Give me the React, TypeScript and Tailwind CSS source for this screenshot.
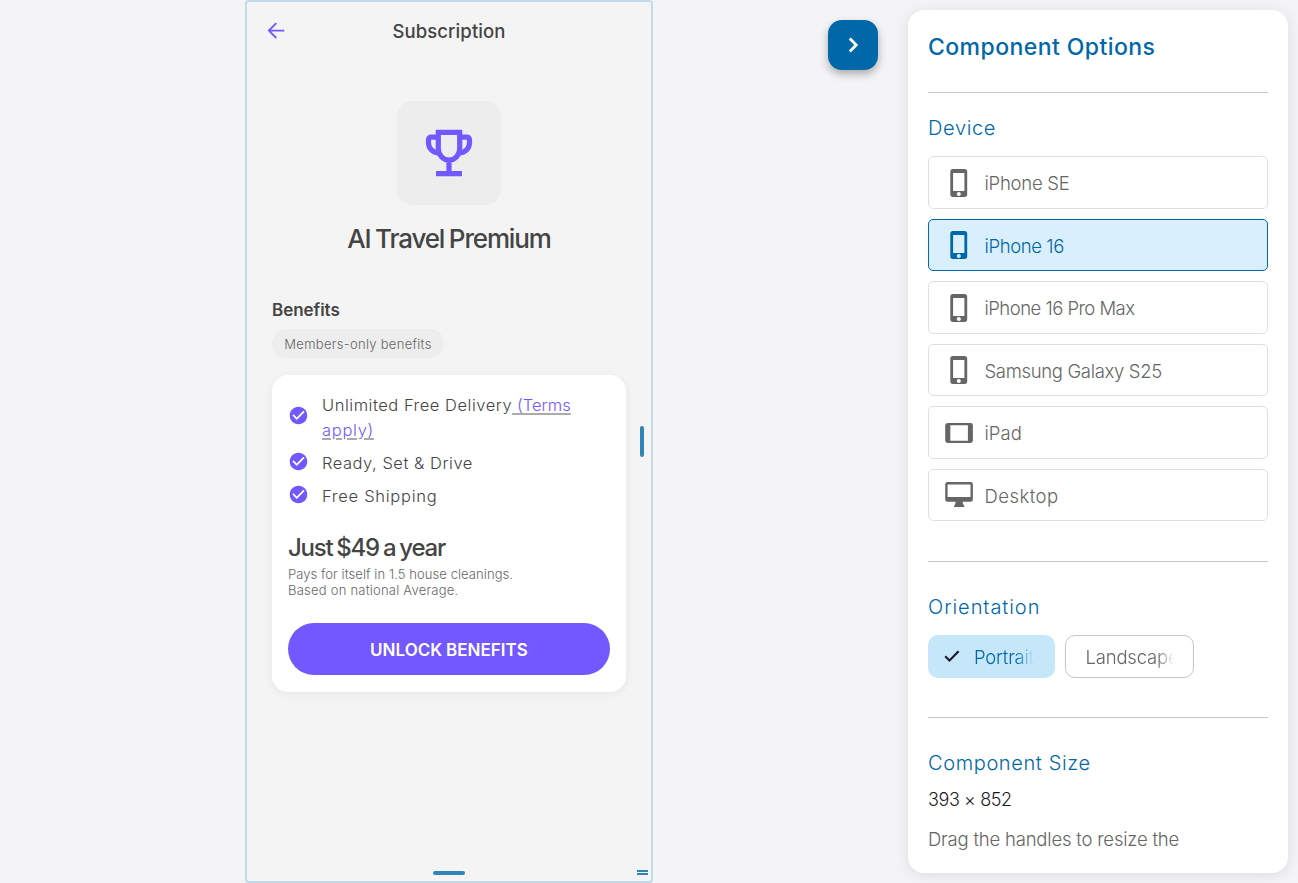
import React from "react";
import { MdCheckCircle } from "react-icons/md";

function PhoneIcon() {
  return (
    <svg width="28" height="28" viewBox="0 0 28 28" className="shrink-0">
      <path
        fill="currentColor"
        fillRule="evenodd"
        d="M8 0h11.500a2.700 2.700 0 0 1 2.700 2.700v22.600a2.700 2.700 0 0 1-2.700 2.700H8a2.700 2.700 0 0 1-2.700-2.700V2.700A2.700 2.700 0 0 1 8 0zM8.100 4v18h11.300V4zM13.800 23a2 2 0 1 0 .01 0z"
      />
    </svg>
  );
}

function TabletIcon() {
  return (
    <svg width="28" height="28" viewBox="0 0 28 28" className="shrink-0">
      <path
        fill="currentColor"
        fillRule="evenodd"
        d="M2.500 4h23a2.400 2.400 0 0 1 2.400 2.400v15.200a2.400 2.400 0 0 1-2.400 2.400h-23A2.400 2.400 0 0 1 .200 21.600V6.400A2.400 2.400 0 0 1 2.500 4zM5.300 6.200v15.600h17.600V6.200z"
      />
    </svg>
  );
}

function DesktopIcon() {
  return (
    <svg width="28" height="28" viewBox="0 0 28 28" className="shrink-0">
      <path
        fill="currentColor"
        fillRule="evenodd"
        d="M2.600 1h22.900a2.400 2.400 0 0 1 2.400 2.400v15a2.400 2.400 0 0 1-2.400 2.400h-7.700v1.500l1.500 3v.700H9v-.700l1.500-3v-1.500H2.600a2.400 2.400 0 0 1-2.400-2.400v-15A2.400 2.400 0 0 1 2.600 1zM2.600 3.500V16h22.900V3.500z"
      />
    </svg>
  );
}

const devices = [
  { name: "iPhone SE", Icon: PhoneIcon, tracking: "tracking-[-0.25px]" },
  { name: "iPhone 16", Icon: PhoneIcon, tracking: "tracking-[-0.4px]", selected: true },
  { name: "iPhone 16 Pro Max", Icon: PhoneIcon, tracking: "tracking-[-0.53px]" },
  { name: "Samsung Galaxy S25", Icon: PhoneIcon, tracking: "tracking-[-0.34px]" },
  { name: "iPad", Icon: TabletIcon, tracking: "tracking-[0.05px]" },
  { name: "Desktop", Icon: DesktopIcon, tracking: "tracking-[0.45px]" },
];

function Phone() {
  return (
    <section className="relative flex h-[883px] w-[408px] flex-col rounded-[4px] border-2 border-[#c1dbea] bg-[#f4f4f4] text-[#444]">
      <header className="flex h-[60px] items-center px-5">
        <svg width="18" height="18" viewBox="0 0 18 18" className="mb-[3px] shrink-0 text-[#7357ff]">
          <path d="M9.300 1.200 1.900 8.600 9.300 16M1.900 8.600H17.300" fill="none" stroke="currentColor" strokeWidth="1.900" />
        </svg>
        <h1 className="flex-1 pr-[18px] text-center text-[18.500px] font-medium tracking-[0.1px]">Subscription</h1>
      </header>
      <div className="flex flex-col items-center pt-[39px]">
        <div className="flex size-[104px] items-center justify-center rounded-2xl bg-[#ededed]">
          <svg width="48" height="48" viewBox="0 0 48 48" className="text-[#7357ff]">
            <path
              d="M13.300 3.400h21.400v16a10.700 11.700 0 0 1-21.400 0zM13.300 8.200H6a2.500 2.500 0 0 0-2.500 2.500v3.100a10 10 0 0 0 10 10M34.700 8.200H42a2.500 2.500 0 0 1 2.500 2.500v3.100a10 10 0 0 1-10 10M24 30v15M11 44.700h26"
              fill="none"
              stroke="currentColor"
              strokeWidth="5.200"
            />
          </svg>
        </div>
        <h2 className="mt-[14px] text-[26px] leading-[39px] font-medium tracking-[-1.150px] [word-spacing:-1.200px]">AI Travel Premium</h2>
      </div>
      <div className="px-[25px] pt-10">
        <h3 className="pt-px text-[17px] leading-[23px] font-semibold tracking-[-0.05px]">Benefits</h3>
        <span className="mt-[7px] flex h-[29px] w-[172px] items-center justify-center rounded-full bg-[#ededed] pt-[2px] text-[13px] font-light tracking-[0.3px] text-[#666]">
          Members-only benefits
        </span>
        <div className="mt-[17px] flex h-[317px] flex-col rounded-2xl bg-white px-4 pt-[18px] shadow-[0_2px_8px_rgba(0,0,0,0.06)]">
          <ul className="flex flex-col gap-2 text-[16.500px] leading-[25px] font-light tracking-[0.52px]">
            <li className="flex items-center gap-[13px]">
              <MdCheckCircle size={21} className="mb-[5px] shrink-0 text-[#7357ff]" />
              <span className="w-[270px]">
                Unlimited Free Delivery
                <span className="tracking-[0.050px] text-[#7357ff] underline decoration-[#aaa] decoration-[1.500px] underline-offset-2">
                  {" "}(Terms<br /><span className="tracking-[0.7px]">apply)</span>
                </span>
              </span>
            </li>
            <li className="flex h-[25px] items-center gap-[13px]">
              <MdCheckCircle size={21} className="mb-[4px] shrink-0 text-[#7357ff]" />
              <span>Ready, Set &amp; Drive</span>
            </li>
            <li className="flex h-[25px] items-center gap-[13px]">
              <MdCheckCircle size={21} className="mb-[4px] shrink-0 text-[#7357ff]" />
              <span className="tracking-[0.72px]">Free Shipping</span>
            </li>
          </ul>
          <p className="mt-[22px] text-[24px] leading-[34px] font-medium tracking-[-1.240px] [word-spacing:-1.200px]">Just $49 a year</p>
          <p className="mt-px text-[13px] leading-4 font-light text-[#666]">
            <span className="block tracking-[0.08px]">Pays for itself in 1.5 house cleanings.</span>
            <span className="block tracking-[0.23px]">Based on national Average.</span>
          </p>
          <button className="mt-[25px] h-[52px] w-full shrink-0 rounded-full bg-[#7357ff] pt-1 text-[17px] font-semibold tracking-[0.02px] text-white [word-spacing:-0.500px]">
            UNLOCK BENEFITS
          </button>
        </div>
      </div>
      <span className="absolute top-[424px] right-[7px] h-[31px] w-1 rounded-sm bg-[#3184b7]" />
      <span className="absolute bottom-[6px] left-[186px] h-[4.500px] w-[32px] rounded-sm bg-[#3184b7]" />
      <span className="absolute right-[3px] bottom-[6px] h-[5px] w-[11px] border-y-2 border-[#3184b7]" />
    </section>
  );
}

function Options() {
  return (
    <aside className="mt-[10px] flex h-[863px] w-[380px] shrink-0 flex-col overflow-hidden rounded-2xl bg-white px-5 font-light shadow-[0_2px_14px_rgba(0,0,0,0.1)]">
      <h2 className="mt-[20px] text-[23px] leading-[34px] font-medium tracking-[0.43px] text-[#0067a8]">Component Options</h2>
      <hr className="mt-7 border-[#c6c5d0]" />
      <h3 className="mt-5 text-[20px] leading-[30px] tracking-[0.65px] text-[#0067a8]">Device</h3>
      <div className="mt-[13px] flex flex-col gap-[10px]">
        {devices.map(({ name, Icon, tracking, selected }) => (
          <button
            key={name}
            className={`flex h-[52.5px] items-center gap-[11px] rounded-[5px] border px-4 pt-px text-left text-[18.5px] ${
              selected ? "border-[#0067a8] bg-[#d9effc] text-[#0067a8]" : "border-[#e0e0e0] bg-white text-[#666]"
            }`}
          >
            <Icon />
            <span className={`pt-[2.8px] pl-[0.5px] ${tracking}`}>{name}</span>
          </button>
        ))}
      </div>
      <hr className="mt-10 border-[#c6c5d0]" />
      <h3 className="mt-[30px] text-[20px] leading-[30px] tracking-[0.95px] text-[#0067a8]">Orientation</h3>
      <div className="mt-[13px] flex gap-[10px] text-[18.5px] tracking-[-0.2px]">
        <button className="flex h-[43px] w-[126.500px] items-center rounded-[10px] bg-[#c6e7fa] pl-[14px] text-[#0067a8]">
          <svg width="20" height="20" viewBox="0 0 20 20" className="mr-3 mb-[2px] shrink-0 text-[#1b1b2b]">
            <path d="M3.200 10.300 7.500 14.500 16.600 5.300" fill="none" stroke="currentColor" strokeWidth="2.200" />
          </svg>
          <span className="w-[60px] overflow-hidden pt-[2px] text-left whitespace-nowrap [mask-image:linear-gradient(to_right,#000_70%,transparent)]">Portrait</span>
        </button>
        <button className="flex h-[43px] w-[129px] items-center rounded-[10px] border-[1.5px] border-[#c6c5d0] pl-5 text-[#666]">
          <span className="w-[88px] overflow-hidden pt-[2px] text-left whitespace-nowrap [mask-image:linear-gradient(to_right,#000_80%,transparent)]">Landscape</span>
        </button>
      </div>
      <hr className="mt-[39px] border-[#c6c5d0]" />
      <h3 className="mt-[30px] text-[20px] leading-[30px] tracking-[0.62px] text-[#0067a8]">Component Size</h3>
      <p className="mt-[7px] text-[18px] leading-[30px] tracking-[-0.4px] text-[#1b1b1f]">393 × 852</p>
      <p className="mt-[9px] text-[18.5px] leading-[30px] tracking-[-0.2px] text-[#666]">Drag the handles to resize the</p>
    </aside>
  );
}

export default function App() {
  return (
    <main className="flex h-[883px] w-[1298px] overflow-hidden bg-[#f4f4f7] font-['Inter',sans-serif]">
      <div className="relative flex w-[908px] shrink-0 pl-[245px]">
        <Phone />
        <button className="absolute top-5 right-[30px] flex size-[50px] items-center justify-center rounded-[14px] bg-[#0067a8] text-white shadow-[0_4px_8px_rgba(0,0,0,0.3)]">
          <svg width="28" height="28" viewBox="0 0 28 28">
            <path d="M10.800 7.500 17.200 14 10.800 20.500" fill="none" stroke="currentColor" strokeWidth="2.800" />
          </svg>
        </button>
      </div>
      <Options />
    </main>
  );
}
